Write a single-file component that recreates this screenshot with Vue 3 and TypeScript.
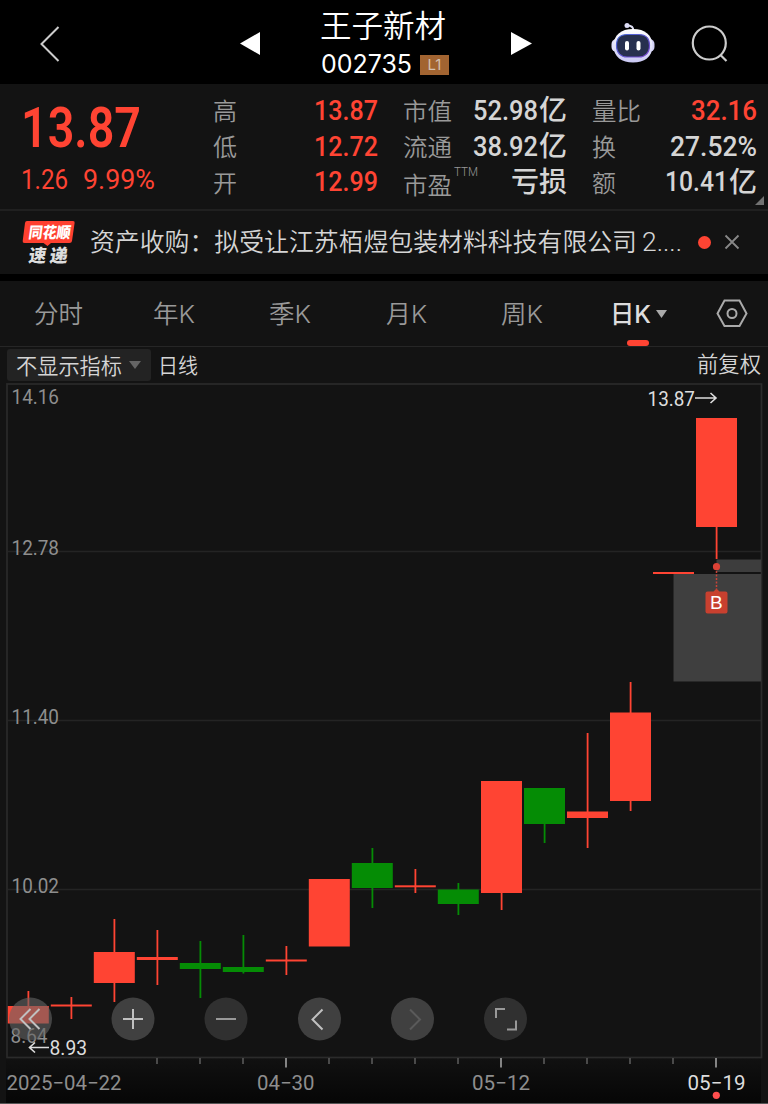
<script setup lang="ts">
import { defineComponent, h } from 'vue'

/** Single-line text fitted to a fixed width on a shared baseline. */
const Fit = defineComponent({
  props: {
    t: { type: String, required: true },
    w: { type: Number, required: true },
    s: { type: Number, default: 24 },
    b: { type: Number, default: 27 },
    h: { type: Number, default: 36 },
  },
  setup(p) {
    return () =>
      h('svg', { width: p.w, height: p.h, style: { display: 'block', overflow: 'visible', flex: 'none' } }, [
        h('text', { x: 0, y: p.b, 'font-size': p.s, textLength: p.w, lengthAdjust: 'spacingAndGlyphs', fill: 'currentColor' }, p.t),
      ])
  },
})

interface Candle { x: number; top: number; bottom: number; high: number; low: number; up: boolean }
const c = (x: number, top: number, bottom: number, high: number, low: number, up = true): Candle => ({ x: x + 0.3, top, bottom, high, low, up })
const candles: Candle[] = [
  c(28, 1006, 1023.5, 991, 1023),
  c(71, 1004.5, 1006.5, 997, 1019),
  c(114, 952, 983, 919, 1002),
  c(157, 957, 960, 930, 985),
  c(200, 963, 969, 941, 998, false),
  c(243, 967, 972, 935, 973.5, false),
  c(286, 959.5, 961.5, 946, 975),
  c(329, 879, 946.5, 879, 946),
  c(372, 863, 888, 848, 908, false),
  c(415, 885.3, 887.3, 869, 893),
  c(458, 889.5, 904, 883, 915, false),
  c(501.2, 781, 893, 781, 910),
  c(544.2, 788, 824, 788, 843, false),
  c(587.2, 811.5, 818, 733, 848),
  c(630.2, 712.5, 801, 682, 811),
  c(673.2, 572, 574, 572, 574),
  c(716.2, 418, 527, 418, 559),
]
const grid = [551.5, 720.5, 889.5]
const labels = [
  { t: '14.16', x: 11.5, y: 404, w: 47.5 },
  { t: '12.78', x: 11.5, y: 555, w: 47.5 },
  { t: '11.40', x: 11.5, y: 724, w: 47.5 },
  { t: '10.02', x: 11.5, y: 893, w: 47.5 },
  { t: '8.64', x: 10.5, y: 1043, w: 37 },
]
const ticks = [157, 200, 243, 286, 329, 372, 415, 458, 501, 544, 587, 630, 673, 716].map((x) => ({
  x,
  major: x === 286 || x === 501 || x === 716,
}))
const tabs = [
  { t: '分时', w: 49, x: 34 },
  { t: '年K', w: 42, x: 70 },
  { t: '季K', w: 42, x: 74 },
  { t: '月K', w: 41, x: 75 },
  { t: '周K', w: 42, x: 74 },
]
</script>

<template>
  <div class="screen">
    <header class="top">
      <svg class="back" width="22" height="38" viewBox="0 0 22 38"><path d="M20.500 2 3.500 19l17 17" /></svg>
      <svg class="prev" width="20" height="23" viewBox="0 0 20 23"><path d="M0 11.500 20 0v23z" /></svg>
      <div class="title">
        <Fit t="王子新材" :w="126" :s="31" :h="47" :b="37" />
        <div class="code">
          <Fit t="002735" :w="91" :s="25" :h="30" :b="26" />
          <span class="level">L1</span>
        </div>
      </div>
      <svg class="next" width="21" height="23" viewBox="0 0 21 23"><path d="M21 11.500 0 0v23z" /></svg>
      <svg class="robot" width="44" height="42" viewBox="0 0 44 42">
        <defs>
          <linearGradient id="shell" x1="0" y1="0" x2="0" y2="1"><stop offset="0" stop-color="#fff" /><stop offset="1" stop-color="#c9c8f4" /></linearGradient>
          <linearGradient id="rim" x1="0" y1="0" x2="1" y2="1"><stop offset="0" stop-color="#4568d8" /><stop offset="1" stop-color="#7b47cc" /></linearGradient>
        </defs>
        <path d="M22.500 9c0-4-2-5.500-6-5.500" fill="none" stroke="#dedff3" stroke-width="1.800" />
        <circle cx="16" cy="3.500" r="2.500" fill="#ddddf6" />
        <rect x=".5" y="17" width="10" height="13" rx="5" fill="#e3e2fb" />
        <rect x="33.500" y="17" width="10" height="13" rx="5" fill="#d2d0f5" />
        <path d="M22 7c12 0 19.500 6 19.500 17S33 40.500 22 40.500 2.500 35 2.500 24 10 7 22 7z" fill="url(#shell)" />
        <path d="M16 12.500h12c7 0 10.500 3.500 10.500 11S34 35 28 35H16c-6 0-10.500-4-10.500-11.500s3.500-11 10.500-11z" fill="#27304f" stroke="url(#rim)" stroke-width="1.200" />
        <rect x="14" y="19" width="4" height="9.500" rx="2" fill="#fff" /><rect x="25.500" y="19" width="4" height="9.500" rx="2" fill="#fff" />
      </svg>
      <svg class="search" width="38" height="38" viewBox="0 0 38 38"><circle cx="18.300" cy="18" r="16.500" /><path d="m29.500 30 6 6" /></svg>
    </header>

    <section class="quote">
      <div class="last">
        <Fit class="price" t="13.87" :w="120" :s="55" :h="72" :b="54" />
        <div class="change"><Fit t="1.26" :w="47" :s="28.5" :b="24" /><Fit t="9.99%" :w="72" :s="28.5" :b="24" /></div>
      </div>
      <div class="stats keys one"><Fit t="高" :w="24" /><Fit t="低" :w="24" /><Fit t="开" :w="24" /></div>
      <div class="stats red two"><Fit t="13.87" :w="64" :s="28" /><Fit t="12.72" :w="64" :s="28" /><Fit t="12.99" :w="64" :s="28" :b="26" /></div>
      <div class="stats keys three">
        <Fit t="市值" :w="49" /><Fit t="流通" :w="49" />
        <div class="ttm"><Fit t="市盈" :w="49" :b="29" /><Fit class="sup" t="TTM" :w="24" :s="12.5" :b="11" /></div>
      </div>
      <div class="stats four">
        <div class="amount"><Fit t="52.98" :w="65" :s="28" /><Fit t="亿" :w="28" :s="28" /></div>
        <div class="amount"><Fit t="38.92" :w="65" :s="28" /><Fit t="亿" :w="28" :s="28" /></div>
        <Fit t="亏损" :w="56" :s="28" />
      </div>
      <div class="stats keys five"><Fit t="量比" :w="49" /><Fit t="换" :w="24" /><Fit t="额" :w="24" /></div>
      <div class="stats six">
        <Fit class="red" t="32.16" :w="66" :s="28" /><Fit t="27.52%" :w="87" :s="28" />
        <div class="amount"><Fit t="10.41" :w="63" :s="28" :b="26" /><Fit t="亿" :w="28" :s="28" :b="27" /></div>
      </div>
      <svg class="corner" width="9" height="9"><path d="M9 0v9H0z" fill="#727272" /></svg>
    </section>

    <section class="news">
      <svg class="logo" width="54" height="46" viewBox="0 0 54 46">
        <path d="M5 1h46q2 0 1.600 2L50 21q-.3 2-2.500 2H29l-3.500 3-4-3H2.500q-2.200 0-1.800-2L3 3q.3-2 2-2z" fill="#ff4030" />
        <g transform="skewX(-8)" font-weight="900" fill="#fff">
          <text x="8.500" y="17.700" font-size="15.500" textLength="42" lengthAdjust="spacingAndGlyphs">同花顺</text>
          <text x="12" y="42" font-size="18" textLength="17.500" lengthAdjust="spacingAndGlyphs" fill="#ddd">速</text>
          <text x="33" y="42" font-size="18" textLength="18" lengthAdjust="spacingAndGlyphs" fill="#ddd">递</text>
        </g>
      </svg>
      <Fit class="headline" t="资产收购：拟受让江苏栢煜包装材料科技有限公司" :w="547" :s="25" :h="62" :b="40" />
      <Fit class="more" t="2...." :w="40" :s="25" :h="62" :b="40" />
      <i class="dot"></i>
      <svg class="close" width="16" height="16"><path d="m1.500 1.500 13 13m0-13-13 13" /></svg>
    </section>

    <nav class="tabs">
      <Fit v-for="tab in tabs" :key="tab.t" :t="tab.t" :w="tab.w" :s="24.5" :h="65" :b="42" :style="{ marginLeft: tab.x + 'px' }" />
      <div class="active">
        <Fit t="日K" :w="41" :s="24.5" :h="65" :b="42" />
        <svg width="11" height="9"><path d="M0 0h11L5.500 8z" fill="#aaa" /></svg>
        <i></i>
      </div>
      <svg class="gear" width="32" height="29" viewBox="0 0 32 29"><path d="M8.500 1.500h15L30.500 14.500l-7 12.500h-15L1.500 14.500z" /><circle cx="16" cy="14.500" r="4.500" /></svg>
    </nav>

    <div class="tools">
      <div class="picker"><Fit t="不显示指标" :w="106" :s="21.5" :h="32" :b="25" /><svg width="12" height="8"><path d="M0 0h12L6 8z" fill="#656565" /></svg></div>
      <Fit class="line" t="日线" :w="40" :s="21" :h="36" :b="26" />
      <Fit class="adjust" t="前复权" :w="64" :s="21.5" :h="36" :b="25" />
    </div>

    <svg class="chart" width="768" height="721" viewBox="0 383 768 721">
      <defs><linearGradient id="axis" x1="0" y1="0" x2="0" y2="1"><stop offset="0" stop-color="#111" /><stop offset="1" stop-color="#060606" /></linearGradient></defs>
      <rect x="6" y="1058" width="755" height="45" fill="url(#axis)" />
      <path v-for="y in grid" :key="y" :d="`M8 ${y}H761`" stroke="#242424" stroke-width="1.500" />
      <rect x="7" y="384" width="754.500" height="673.500" fill="none" stroke="#2b2b2b" stroke-width="1.700" />
      <rect x="716.500" y="559.500" width="44.500" height="12.500" fill="#3d3d3d" />
      <rect x="673.500" y="574" width="87.500" height="107.500" fill="#3f3f3f" />
      <g v-for="k in candles" :key="k.x" :fill="k.up ? '#ff4433' : '#058c05'">
        <rect :x="k.x - 0.8" :y="k.high" width="1.800" :height="k.low - k.high" />
        <rect :x="k.x - 20.500" :y="k.top" width="41" :height="k.bottom - k.top" />
      </g>
      <circle cx="716.500" cy="566.700" r="3.600" fill="#dc4236" />
      <path d="M716.500 571v18" stroke="#c84338" stroke-width="1.500" stroke-dasharray="2 1.500" />
      <path d="M707.500 591.500h6l3-3 3 3h6q2 0 2 2v18q0 2-2 2h-18q-2 0-2-2v-18q0-2 2-2z" fill="#c8402f" />
      <text x="710" y="609.300" class="mark">B</text>
      <text v-for="l in labels" :key="l.t" class="num" :x="l.x" :y="l.y" :textLength="l.w" lengthAdjust="spacingAndGlyphs">{{ l.t }}</text>

      <text class="num bright" x="647.500" y="406" textLength="47.500" lengthAdjust="spacingAndGlyphs">13.87</text>
      <path d="M695 398h21m-5.500-5 5.500 5-5.500 5" class="arrow" />
      <g>
        <circle cx="30.500" cy="1019" r="21.500" fill="#666" fill-opacity=".6" />
        <path d="m30.500 1009-10 10 10 10m9-20-10 10 10 10" class="glyph" />
        <circle cx="133" cy="1019" r="21.500" fill="#404040" /><path d="M123 1019h20m-10-10v20" class="glyph" />
        <circle cx="226" cy="1019" r="21.500" fill="#303030" /><path d="M216 1019h20" class="glyph dim" />
        <circle cx="319.500" cy="1019" r="21.500" fill="#404040" /><path d="m322.500 1009.500-10 10 10 10" class="glyph" />
        <circle cx="412.500" cy="1019" r="21.500" fill="#404040" /><path d="m410 1009.500 10 10-10 10" class="glyph off" />
        <circle cx="505.500" cy="1019" r="21.500" fill="#303030" /><path d="M496 1018v-9h9m2 20.500h9v-9" class="glyph dim" />
      </g>
      <path d="M49 1047.500H30m5-5-5.500 5 5.500 5" class="arrow" />
      <text class="num bright" x="49.500" y="1055" textLength="37.500" lengthAdjust="spacingAndGlyphs">8.93</text>

      <path v-for="t in ticks" :key="t.x" :d="`M${t.x} 1058v${t.major ? 9.5 : 6}`" :stroke="t.major ? '#999' : '#555'" stroke-width="1.700" />
      <g class="num">
        <text x="6.500" y="1090" textLength="115" lengthAdjust="spacingAndGlyphs">2025−04−22</text>
        <text x="257" y="1090" textLength="57.500" lengthAdjust="spacingAndGlyphs">04−30</text>
        <text x="472" y="1090" textLength="58" lengthAdjust="spacingAndGlyphs">05−12</text>
        <text class="today" x="687.500" y="1090" textLength="58" lengthAdjust="spacingAndGlyphs">05−19</text>
      </g>
      <circle cx="716.300" cy="1095.300" r="3.600" fill="#ff4e4e" />
      <rect y="1103" width="768" height="1" fill="#555" />
    </svg>
  </div>
</template>

<style>
body { background: #131313; }
</style>

<style scoped>
.screen { width: 768px; height: 1104px; overflow: hidden; background: #131313; color: #d5d5d5; font-family: Roboto, 'Noto Sans CJK SC', sans-serif; }
.top { display: flex; height: 84px; background: #000; align-items: flex-start; }
.top > svg { flex: none; fill: none; }
.back { margin: 25px 0 0 38px; }
.back path, .search { stroke: #ccc; stroke-width: 2; }
.prev { margin: 32px 0 0 180px; }
.prev path, .next path { fill: #fff; }
.title { width: 130px; margin-left: 60px; color: #fff; font-family: Inter, 'Noto Sans CJK SC', sans-serif; font-weight: 350; }
.code { display: flex; padding-left: 1px; font-weight: 400; }
.level { width: 29px; height: 20px; margin: 8px 0 0 8px; flex: none; background: #a26431; color: #d5c0b0; font: 15px/20px Inter, sans-serif; text-align: center; }
.next { margin: 32px 0 0 61px; }
.robot { margin: 22px 0 0 79px; }
.search { margin: 25px 0 0 36px; stroke-width: 2.2; }
.quote { position: relative; display: flex; height: 125px; padding-top: 9px; box-sizing: border-box; font-weight: 500; }
.last { width: 136px; margin-left: 21px; color: #ff4433; flex: none; }
.price { font-weight: 600; }
.change { display: flex; gap: 15px; font-weight: 450; }
.stats { display: flex; flex-direction: column; flex: none; }
.keys { color: #999; font-weight: 350; }
.red { color: #ff4433; }
.one { width: 26px; margin-left: 56px; }
.two { width: 64px; margin-left: 75px; }
.three { width: 70px; margin-left: 25px; }
.ttm, .amount { display: flex; }
.amount { gap: 1px; }
.sup { margin-left: 2px; }
.four { width: 94px; align-items: flex-end; }
.five { width: 49px; margin-left: 25px; }
.six { width: 94px; align-items: flex-end; margin-left: 22px; }
.corner { position: absolute; right: 4px; bottom: 4px; }
.news { display: flex; height: 65px; align-items: flex-start; box-sizing: border-box; border-top: 2px solid #202020; font-weight: 350; }
.logo { margin: 9px 0 0 22px; flex: none; }
.headline { margin-left: 14px; }
.more { margin-left: 5px; }
.dot { flex: none; width: 13px; height: 13px; margin: 25px 0 0 16px; border-radius: 50%; background: #ff4433; }
.close { flex: none; margin: 23px 0 0 13px; fill: none; stroke: #888; stroke-width: 1.8; }
.tabs { display: flex; height: 73px; box-sizing: border-box; border-top: 7px solid #000; border-bottom: 1px solid #262626; color: #999; font-family: Inter, 'Noto Sans CJK SC', sans-serif; font-weight: 350; }
.active { position: relative; display: flex; width: 58px; flex: none; margin-left: 67px; gap: 5px; color: #ddd; font-weight: 500; }
.active > svg:nth-child(2) { flex: none; margin-top: 29px; }
.active i { position: absolute; left: 17px; bottom: 0; width: 22px; height: 6px; border-radius: 3px; background: #ff4433; }
.gear { flex: none; margin: 18px 0 0 48px; fill: none; stroke: #aaa; stroke-width: 2; }
.tools { display: flex; height: 36px; align-items: flex-start; font-weight: 350; }
.picker { display: flex; width: 144px; height: 32px; margin: 2px 0 0 7px; padding-left: 9px; box-sizing: border-box; border-radius: 3px; background: #232323; gap: 7px; align-items: center; }
.line { margin-left: 7px; }
.adjust { margin-left: 499px; }
.chart { display: block; }
.num { fill: #8e8e8e; font-size: 21px; font-weight: 450; }
.bright { fill: #ddd; }
.today { fill: #ddd; }
.mark { fill: #fff; font: 500 19px 'Liberation Sans', sans-serif; }
.arrow { fill: none; stroke: #ddd; stroke-width: 1.6; }
.glyph { fill: none; stroke: #c0c0c0; stroke-width: 2; }
.dim { stroke: #999; }
.off { stroke: #5a5a5a; }
</style>
